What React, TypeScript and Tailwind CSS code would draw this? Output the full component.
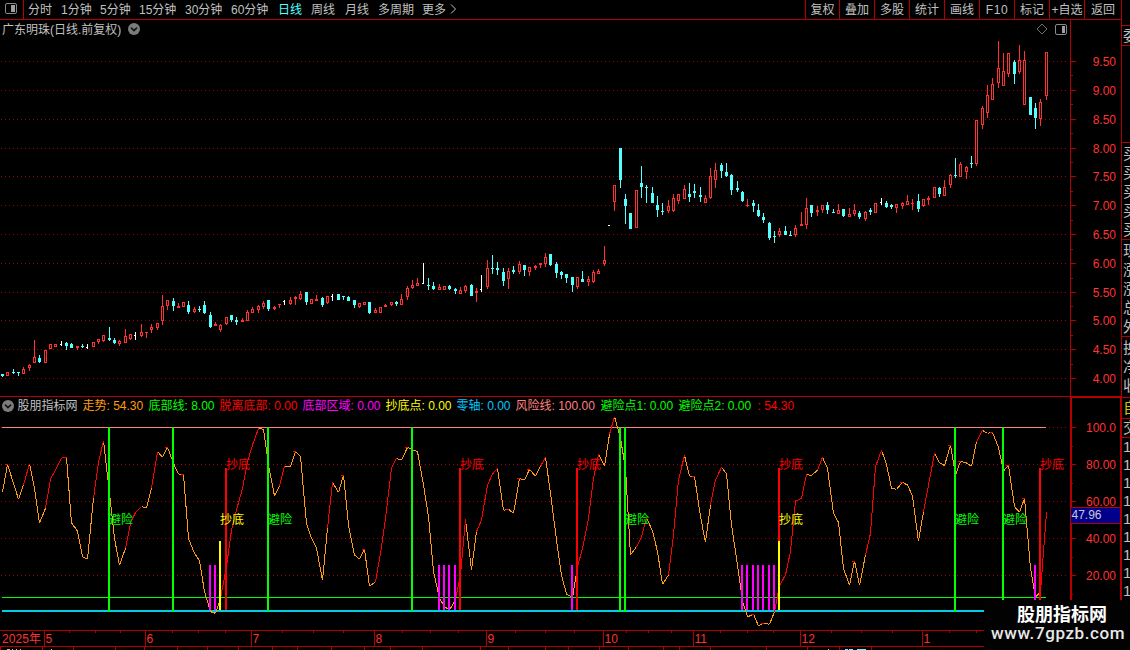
import React from "react";

const RED = "#b40000";
const CJK = "font-['Liberation_Sans','Noto_Sans_CJK_SC',sans-serif]";

// Candles: x, high, body top, body bottom, low; R = rising, C = falling, W = unchanged
const CANDLES = `
2,374,374,376,377,C;7,372,372,376,376,R;13,369,372,373,374,C;18,372,372,373,376,C;23,367,369,374,374,R;
29,364,365,368,371,R;34,340,357,363,363,R;39,355,358,362,363,C;45,350,350,363,363,R;50,344,344,349,349,R;
55,344,344,347,347,R;61,341,344,345,346,W;66,342,343,346,350,C;71,343,344,348,348,C;77,346,346,348,350,R;
82,344,346,347,348,C;87,344,347,348,349,W;93,342,342,347,347,R;98,339,339,342,344,R;103,335,335,341,342,R;
109,327,338,340,341,C;114,338,340,343,344,C;119,340,341,344,346,R;125,329,336,343,343,R;130,334,334,339,340,R;
135,332,335,336,340,W;141,324,332,336,337,R;146,332,332,333,338,R;151,324,327,330,333,R;157,323,323,328,330,R;
162,295,306,321,325,R;167,300,300,306,310,R;173,298,301,306,311,C;178,303,306,308,308,R;183,302,302,307,307,R;
188,301,305,312,314,C;194,307,309,312,313,R;199,306,309,310,312,C;204,301,305,313,314,C;210,312,315,327,328,C;
215,322,324,326,326,R;220,324,325,330,332,R;226,317,317,324,325,R;231,315,315,320,322,C;236,317,320,322,325,C;
242,318,320,322,322,R;247,310,312,321,321,R;252,307,309,313,313,R;258,305,306,310,313,R;263,301,303,307,309,R;
268,300,300,309,311,C;274,306,307,309,310,R;279,304,304,305,308,R;284,300,301,302,305,W;290,297,300,304,305,R;
295,296,297,299,305,R;300,291,294,299,300,R;306,292,292,302,305,C;311,299,299,304,304,R;316,295,299,301,301,R;
322,297,298,305,307,C;327,296,296,303,304,R;332,294,296,297,301,W;338,294,294,300,300,C;343,296,296,297,300,C;
348,296,297,301,301,C;354,300,300,305,308,C;359,303,303,307,308,R;364,302,302,305,305,R;369,302,302,313,314,C;
375,308,310,313,313,R;380,307,307,313,313,R;385,304,305,307,307,R;391,302,302,305,306,R;396,301,302,304,306,C;
401,294,299,305,305,R;407,286,288,297,300,R;412,280,285,288,289,R;417,278,283,286,286,R;423,263,283,284,284,W;
428,278,285,286,290,C;433,282,286,289,290,C;439,284,287,290,290,R;444,286,286,290,290,R;449,285,286,289,290,C;
455,288,289,291,294,C;460,287,290,294,294,R;465,285,286,291,293,R;471,284,285,296,296,C;476,288,291,293,302,R;
481,275,289,290,292,W;487,260,268,287,289,R;492,255,268,269,274,C;497,262,268,270,275,C;503,268,272,281,286,C;
508,268,271,279,289,R;513,266,270,272,274,C;519,261,264,272,274,R;524,265,265,270,276,C;529,267,267,272,276,R;
535,265,266,268,270,R;540,263,263,265,268,R;545,253,257,264,267,R;550,254,254,265,266,C;556,262,264,273,278,C;
561,271,272,275,279,C;566,274,274,278,283,C;572,277,277,285,292,C;577,277,277,287,289,R;582,271,279,282,282,C;
588,276,279,282,286,R;593,270,272,282,283,R;598,269,271,274,274,R;604,246,260,264,266,R;609,225,225,226,226,W;
614,185,185,202,211,R;620,148,148,180,188,C;625,194,199,206,224,C;630,213,213,229,229,C;636,190,190,228,228,R;
641,166,183,187,198,C;646,185,187,188,203,C;652,187,193,203,203,C;657,196,205,210,217,C;662,203,211,212,215,C;
668,200,206,211,213,R;673,194,198,211,212,R;678,194,194,201,204,R;684,185,189,199,199,R;689,183,194,197,202,C;
694,184,191,193,198,C;700,187,195,197,202,C;705,195,198,203,203,R;710,168,176,198,199,R;715,163,170,180,188,R;
721,163,165,171,178,C;726,163,172,176,177,C;731,174,175,190,195,C;737,181,188,190,192,C;742,191,192,201,202,C;
747,199,205,206,207,R;753,200,203,206,212,C;758,204,210,216,217,C;763,213,217,220,223,C;769,222,223,238,240,C;
774,231,236,237,243,C;779,228,231,235,237,R;785,226,231,235,235,C;790,231,235,236,236,C;795,225,228,235,237,R;
801,212,224,226,226,R;806,198,208,225,229,R;811,205,205,213,217,C;817,206,210,212,216,R;822,205,205,210,213,R;
827,202,205,210,214,C;833,209,212,213,213,C;838,204,210,214,214,R;843,209,209,216,217,C;849,208,214,217,217,R;
854,204,210,214,216,R;859,211,213,217,219,C;865,211,212,219,221,R;870,208,210,212,215,C;875,203,203,213,213,R;
881,198,202,203,205,W;886,201,203,207,208,C;891,204,205,207,209,C;896,204,204,208,213,R;902,202,203,206,209,R;
907,195,201,205,205,R;912,199,203,204,210,R;918,194,201,209,212,C;923,199,199,206,207,R;928,196,198,200,205,R;
934,187,187,198,198,R;939,187,188,194,197,C;944,180,187,196,196,R;950,174,175,185,188,R;955,158,175,176,178,C;
960,162,164,177,177,R;966,166,167,172,179,R;971,156,163,164,168,C;976,120,120,164,166,R;982,106,108,125,129,R;
987,85,95,113,118,R;992,78,84,100,100,R;998,41,68,83,88,R;1003,53,71,86,86,R;1008,53,53,74,77,R;
1014,60,62,74,84,C;1019,45,60,72,74,R;1024,51,60,105,105,R;1030,97,97,115,115,C;1035,103,108,118,129,C;
1040,99,102,119,126,R;1046,52,52,96,100,R`
  .trim()
  .split(";")
  .map((row) => {
    const p = row.trim().split(",");
    return { x: +p[0], hi: +p[1], top: +p[2], bot: +p[3], lo: +p[4], kind: p[5] };
  });

// Trend line, one value per candle, in thirds of a pixel below y = 395
const TREND = [
  292, 208, 265, 313, 270, 206, 280, 384, 340, 252, 225, 188, 188, 384, 408, 485, 493, 310, 202, 137, 295, 430, 511,
  460, 385, 352, 335, 338, 280, 170, 186, 157, 205, 238, 238, 430, 475, 497, 590, 650, 655, 610, 515, 405, 345, 280,
  200, 150, 100, 103, 210, 303, 272, 214, 216, 169, 185, 385, 430, 460, 556, 400, 262, 292, 241, 390, 480, 492, 463,
  574, 560, 475, 370, 220, 190, 196, 157, 164, 170, 270, 365, 530, 610, 635, 645, 615, 540, 373, 525, 410, 375, 270,
  237, 220, 346, 343, 355, 250, 256, 223, 244, 214, 187, 295, 435, 540, 597, 608, 515, 460, 370, 250, 178, 214, 118,
  65, 130, 220, 480, 455, 425, 368, 408, 470, 568, 540, 420, 255, 181, 244, 244, 365, 442, 330, 255, 217, 236, 390,
  510, 618, 666, 657, 693, 685, 688, 650, 572, 540, 470, 318, 310, 238, 242, 225, 187, 220, 355, 382, 520, 571, 498,
  571, 480, 415, 215, 166, 208, 280, 283, 262, 270, 303, 439, 350, 270, 175, 203, 212, 151, 240, 199, 204, 214, 140,
  106, 115, 112, 158, 228, 211, 335, 352, 310, 520, 607, 590, 352,
];

const PRICES: [number, string][] = [
  [61, "9.50"], [90, "9.00"], [119, "8.50"], [148, "8.00"], [176, "7.50"], [205, "7.00"],
  [234, "6.50"], [263, "6.00"], [292, "5.50"], [320, "5.00"], [349, "4.50"], [378, "4.00"],
];
const LEVELS: [number, string][] = [
  [427, "100.0"], [464, "80.00"], [501, "60.00"], [538, "40.00"], [575, "20.00"],
];

function Candle({ c }: { c: (typeof CANDLES)[number] }) {
  const color = c.kind === "R" ? "#ff3232" : c.kind === "C" ? "#54ffff" : "#ffffff";
  const h = c.bot - c.top;
  const left = c.x - 1;
  return (
    <g fill={color}>
      <rect x={c.x} y={c.hi} width={1} height={c.lo - c.hi} />
      <rect x={left} y={c.top} width={c.kind === "W" ? 2 : 3} height={h} />
      {c.kind === "R" && h > 2 && <rect x={c.x} y={c.top + 1} width={1} height={h - 2} fill="#000" />}
    </g>
  );
}

function Grid({ ys }: { ys: number[] }) {
  return (
    <>
      {ys.map((y) => (
        <line key={y} x1={1} x2={1067} y1={y + 0.5} y2={y + 0.5} stroke="#a00000" strokeDasharray="1 3" />
      ))}
    </>
  );
}

function PriceChart() {
  return (
    <svg className="block" width={1070} height={358} viewBox="0 38 1070 358" shapeRendering="crispEdges">
      <Grid ys={PRICES.map((p) => p[0])} />
      {CANDLES.map((c) => (
        <Candle key={c.x} c={c} />
      ))}
    </svg>
  );
}

function TrendLine() {
  const pts = TREND.map((v, i) => [CANDLES[i].x + 0.5, 395 + v / 3]);
  const orange: string[] = [];
  const red: string[] = [];
  for (let i = 1; i < pts.length; i++) {
    const rise = TREND[i] <= TREND[i - 1];
    const before = i > 1 && TREND[i - 1] <= TREND[i - 2];
    const seg = `M${pts[i - 1][0]} ${pts[i - 1][1]}L${pts[i][0]} ${pts[i][1]}`;
    (rise && before ? red : orange).push(seg);
    const falls = i + 1 < TREND.length && TREND[i + 1] > TREND[i];
    if (rise && !before && falls) red.push(`M${pts[i][0] - 3} ${pts[i][1]}h3`);
  }
  return (
    <g fill="none" strokeWidth={1}>
      <path d={orange.join("")} stroke="#ff9c10" />
      <path d={red.join("")} stroke="#ff0000" />
    </g>
  );
}

function Bars({ xs, top, bottom, color }: { xs: number[]; top: number; bottom: number; color: string }) {
  return (
    <>
      {xs.map((x) => (
        <rect key={x} x={x} y={top} width={2} height={bottom - top} fill={color} />
      ))}
    </>
  );
}

function Marks({ xs, y, color, text }: { xs: number[]; y: number; color: string; text: string }) {
  return (
    <>
      {xs.map((x) => (
        <text key={x} x={x} y={y} fill={color} textLength={24}>
          {text}
        </text>
      ))}
    </>
  );
}

function IndicatorChart() {
  return (
    <svg
      className={`block text-[12px] ${CJK}`}
      width={1070}
      height={216}
      viewBox="0 414 1070 216"
      shapeRendering="crispEdges"
    >
      <Grid ys={LEVELS.map((p) => p[0])} />
      <rect x={2} y={427} width={1044} height={1} fill="#ff8080" />
      <rect x={2} y={597} width={1044} height={1} fill="#00ff00" />
      <rect x={2} y={610} width={1044} height={2} fill="#00c8ff" />
      <line x1={2} x2={984} y1={611.5} y2={611.5} stroke="#00ff00" strokeDasharray="1 4" />
      <TrendLine />
      <Bars xs={[209, 214, 438, 443, 448, 454, 571, 741, 746, 752, 757, 762, 768, 773, 1034]} top={565} bottom={610} color="#ff00ff" />
      <Bars xs={[225, 459, 576, 778, 1039]} top={468} bottom={610} color="#ff0000" />
      <Bars xs={[219, 778]} top={541} bottom={610} color="#ffff00" />
      <Bars xs={[108, 172, 267, 411, 619, 624, 954, 1002]} top={427} bottom={612} color="#00ff00" />
      <Marks xs={[226, 460, 577, 779, 1040]} y={469} color="#ff0000" text="抄底" />
      <Marks xs={[220, 779]} y={524} color="#ffff00" text="抄底" />
      <Marks xs={[109, 268, 625, 955, 1003]} y={524} color="#00ff00" text="避险" />
    </svg>
  );
}

function ValueAxis() {
  const minor = [75, 104, 133, 162, 191, 220, 249, 278, 306, 335, 364, 446, 483, 520, 557, 594];
  const major = [...PRICES, ...LEVELS];
  return (
    <svg
      className={`block shrink-0 text-[12px] ${CJK}`}
      width={52}
      height={630}
      viewBox="1070 20 52 630"
      shapeRendering="crispEdges"
    >
      <g fill={RED}>
        <rect x={1070} y={20} width={1} height={377} />
        <rect x={1121} y={20} width={1} height={377} />
        <rect x={1070} y={396} width={52} height={2} />
        <rect x={1070} y={396} width={2} height={254} />
        <rect x={1120} y={396} width={2} height={254} />
        {major.map(([y]) => (
          <rect key={y} x={1071} y={y} width={5} height={1} />
        ))}
        {minor.map((y) => (
          <rect key={y} x={1071} y={y} width={2} height={1} />
        ))}
      </g>
      <g fill="#ff3232" textAnchor="end">
        {major.map(([y, label]) => (
          <text key={y} x={1116} y={y + 5}>
            {label}
          </text>
        ))}
      </g>
      <rect x={1071} y={507} width={49} height={17} fill="#00008c" />
      <rect x={1071} y={507} width={49} height={1} fill={RED} />
      <rect x={1071} y={523} width={49} height={1} fill={RED} />
      <text x={1071.5} y={519} fill="#c8c8c8">
        47.96
      </text>
    </svg>
  );
}

function TimeAxis() {
  const months: [number, string][] = [
    [44, "5"], [145, "6"], [251, "7"], [374, "8"], [486, "9"], [603, "10"], [693, "11"], [800, "12"], [922, "1"],
  ];
  const ticks = [69, 95, 120, 172, 198, 225, 282, 313, 343, 402, 430, 458, 515, 545, 574, 626, 648, 671, 720, 747, 773, 831, 861, 892, 949, 976];
  const tabs = [0, 42, 73, 115, 144, 177, 207, 238, 272, 297, 331, 364, 390, 422, 480, 508, 545, 568, 599, 628, 663, 679, 710, 766, 807, 839, 871];
  return (
    <svg
      className={`block text-[12px] ${CJK}`}
      width={1070}
      height={20}
      viewBox="0 630 1070 20"
      shapeRendering="crispEdges"
    >
      <g fill={RED}>
        <rect x={0} y={630} width={1070} height={1} />
        <rect x={0} y={646} width={1070} height={1} />
        {months.map(([x]) => (
          <rect key={x} x={x} y={630} width={1} height={16} />
        ))}
        {ticks.map((x) => (
          <rect key={x} x={x} y={631} width={1} height={2} />
        ))}
        {tabs.map((x) => (
          <rect key={x} x={x} y={647} width={1} height={3} />
        ))}
      </g>
      <g fill="#ff3232">
        <text x={2} y={643} textLength={39}>
          2025年
        </text>
        {months.map(([x, label]) => (
          <text key={x} x={x + 1.5} y={643}>
            {label}
          </text>
        ))}
      </g>
      <g fill="#c0c0c0">
        <rect x={7} y={649} width={3} height={1} />
        <rect x={12} y={649} width={1} height={1} />
        <rect x={16} y={649} width={1} height={1} />
        <rect x={20} y={649} width={1} height={1} />
        <rect x={51} y={649} width={1} height={1} />
        <rect x={828} y={649} width={1} height={1} />
        <rect x={845} y={649} width={3} height={1} fill="#54ffff" />
        <rect x={849} y={649} width={4} height={1} fill="#54ffff" />
        <rect x={857} y={649} width={9} height={1} fill="#54ffff" />
      </g>
    </svg>
  );
}

function PanelIcon({ wide = false, className = "" }: { wide?: boolean; className?: string }) {
  return (
    <svg className={`block ${className}`} width={12} height={12} viewBox="0 0 12 12">
      <rect x={0.5} y={0.5} width={11} height={10} rx={1.5} fill="none" stroke="#8a8a8a" />
      <rect x={wide ? 6 : 7} y={2} width={wide ? 4 : 3} height={7} fill="#a0a0a0" />
    </svg>
  );
}

function DropIcon({ className = "" }: { className?: string }) {
  return (
    <svg className={`block ${className}`} width={12} height={12} viewBox="0 0 12 12">
      <circle cx={6} cy={6} r={6} fill="#7c7c7c" />
      <path d="M3 4.6l3 3 3-3" fill="none" stroke="#111" strokeWidth={1.5} />
    </svg>
  );
}

function Toolbar() {
  return (
    <header className="flex h-5 shrink-0 leading-[20px] text-[#c0c0c0] [&_span]:h-[19px]">
      <div className="flex w-6 justify-start border-r border-b border-[#b40000] pt-[3px] pl-[5px]">
        <PanelIcon wide />
      </div>
      <nav className="flex flex-1 border-b border-[#b40000] pl-1">
        <span className="w-[33px]">分时</span>
        <span className="w-[39px]">1分钟</span>
        <span className="w-[39px]">5分钟</span>
        <span className="w-[46px]">15分钟</span>
        <span className="w-[46px]">30分钟</span>
        <span className="w-[47px]">60分钟</span>
        <span className="w-[33px] text-[#54ffff]">日线</span>
        <span className="w-[34px]">周线</span>
        <span className="w-[33px]">月线</span>
        <span className="w-[44px]">多周期</span>
        <span className="w-[28px]">更多</span>
        <svg className="mt-1 block" width={7} height={11} viewBox="0 0 7 11">
          <path d="M1 .5L5.5 5 1 9.5" fill="none" stroke="#c0c0c0" />
        </svg>
      </nav>
      <div className="flex border-b border-[#b40000] text-center [&>span]:border-l [&>span]:border-[#b40000]">
        <span className="w-[34px]">复权</span>
        <span className="w-[35px]">叠加</span>
        <span className="w-[35px]">多股</span>
        <span className="w-[35px]">统计</span>
        <span className="w-[35px]">画线</span>
        <span className="w-[35px] tracking-[0.6px]">F10</span>
        <span className="w-[35px]">标记</span>
        <span className="w-[35px]">+自选</span>
        <span className="w-[37px]">返回</span>
      </div>
      <div className="w-[9px] border-l border-[#b40000]" />
    </header>
  );
}

function Legend() {
  return (
    <div className="flex h-[17px] items-center text-[12px] leading-[17px] [&>span]:pt-px">
      <DropIcon className="ml-[2px]" />
      <span className="ml-[3.5px] w-[65px] text-[#c0c0c0]">股朋指标网</span>
      <span className="w-[66px] text-[#ff9c10]">走势: 54.30</span>
      <span className="w-[71px] text-[#00ff00]">底部线: 8.00</span>
      <span className="w-[83px] text-[#ff0000]">脱离底部: 0.00</span>
      <span className="w-[83px] text-[#ff00ff]">底部区域: 0.00</span>
      <span className="w-[71px] text-[#ffff00]">抄底点: 0.00</span>
      <span className="w-[59px] text-[#00c8ff]">零轴: 0.00</span>
      <span className="w-[85px] text-[#ff8080]">风险线: 100.00</span>
      <span className="w-[78px] text-[#00ff00]">避险点1: 0.00</span>
      <span className="w-[79px] text-[#00ff00]">避险点2: 0.00</span>
      <span className="text-[#ff0000]">: 54.30</span>
    </div>
  );
}

function SideStrip() {
  const block = "flex flex-col border-b border-[#b40000]";
  const row = "h-[19px] leading-[19px]";
  return (
    <aside className="w-2 shrink-0 overflow-hidden text-[15px] whitespace-nowrap text-[#c0c0c0] [&_span]:pl-px">
      <div className="h-[6px] border-b border-[#b40000]" />
      <div className={`${block} h-5`}>
        <span className={row}>委</span>
      </div>
      <div className="h-[97px] border-b border-[#b40000]" />
      <div className={`${block} h-[97px] pt-px`}>
        {["买", "买", "买", "买", "买"].map((t, i) => (
          <span key={i} className={row}>{t}</span>
        ))}
      </div>
      <div className={`${block} h-[97px] pt-px`}>
        {["现", "涨", "涨", "总", "外"].map((t, i) => (
          <span key={i} className={row}>{t}</span>
        ))}
      </div>
      <div className={`${block} h-[61px] pt-px`}>
        {["换", "净", "收"].map((t, i) => (
          <span key={i} className={row}>{t}</span>
        ))}
      </div>
      <div className={`${block} h-[21px] text-[#c8c800]`}>
        <span className={row}>自</span>
      </div>
      <div className={`${block} h-[19px]`}>
        <span className="h-[18px] leading-[18px]">交</span>
      </div>
      <div className="flex flex-col">
        {Array.from({ length: 9 }, (_, i) => (
          <span key={i} className="h-[18px] leading-[18px]">1</span>
        ))}
      </div>
    </aside>
  );
}

export default function App() {
  return (
    <div
      className={`relative flex h-[650px] w-[1130px] flex-col overflow-hidden bg-black text-[12px] whitespace-nowrap ${CJK}`}
    >
      <Toolbar />
      <div className="flex h-[630px]">
        <main className="flex w-[1070px] shrink-0 flex-col">
          <div className="flex h-[18px] items-center pl-[2px] text-[#c0c0c0]">
            <span className="w-[126px] pt-px">广东明珠(日线.前复权)</span>
            <DropIcon />
            <svg className="ml-auto block" width={12} height={12} viewBox="0 0 12 12">
              <path d="M6 1l5 5-5 5-5-5z" fill="none" stroke="#707070" />
            </svg>
            <PanelIcon className="mt-px mr-[3px] ml-[7px]" />
          </div>
          <PriceChart />
          <div className="h-px bg-[#b40000]" />
          <Legend />
          <IndicatorChart />
          <TimeAxis />
        </main>
        <ValueAxis />
        <SideStrip />
      </div>
      <div className="absolute top-[600px] left-[984px] flex h-[50px] w-[146px] flex-col bg-[#020202] pl-[7px] text-white">
        <span className="mt-[2px] ml-[26px] h-[24px] text-[18px] leading-[26px] font-bold">股朋指标网</span>
        <span className="h-[20px] font-['Roboto',sans-serif] text-[17px] leading-[14px] font-medium tracking-[0.6px] text-[#e8e8e8]">
          www.7gpzb.com
        </span>
      </div>
    </div>
  );
}
